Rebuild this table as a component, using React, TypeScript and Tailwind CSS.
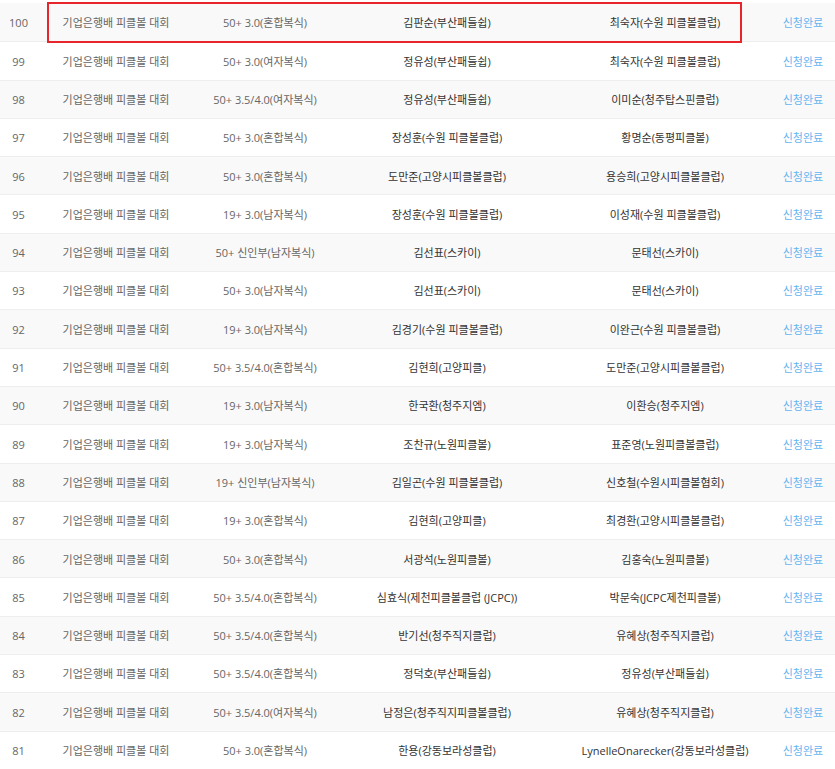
import React from "react";

type Row = {
  no: number;
  event: string;
  division: string;
  player1: string;
  player2: string;
};

const rows: Row[] = [
  { no: 100, event: "기업은행배 피클볼 대회", division: "50+ 3.0(혼합복식)", player1: "김판순(부산패들쉽)", player2: "최숙자(수원 피클볼클럽)" },
  { no: 99, event: "기업은행배 피클볼 대회", division: "50+ 3.0(여자복식)", player1: "정유성(부산패들쉽)", player2: "최숙자(수원 피클볼클럽)" },
  { no: 98, event: "기업은행배 피클볼 대회", division: "50+ 3.5/4.0(여자복식)", player1: "정유성(부산패들쉽)", player2: "이미순(청주탑스핀클럽)" },
  { no: 97, event: "기업은행배 피클볼 대회", division: "50+ 3.0(혼합복식)", player1: "장성훈(수원 피클볼클럽)", player2: "황명순(동평피클볼)" },
  { no: 96, event: "기업은행배 피클볼 대회", division: "50+ 3.0(혼합복식)", player1: "도만준(고양시피클볼클럽)", player2: "용승희(고양시피클볼클럽)" },
  { no: 95, event: "기업은행배 피클볼 대회", division: "19+ 3.0(남자복식)", player1: "장성훈(수원 피클볼클럽)", player2: "이성재(수원 피클볼클럽)" },
  { no: 94, event: "기업은행배 피클볼 대회", division: "50+ 신인부(남자복식)", player1: "김선표(스카이)", player2: "문태선(스카이)" },
  { no: 93, event: "기업은행배 피클볼 대회", division: "50+ 3.0(남자복식)", player1: "김선표(스카이)", player2: "문태선(스카이)" },
  { no: 92, event: "기업은행배 피클볼 대회", division: "19+ 3.0(남자복식)", player1: "김경기(수원 피클볼클럽)", player2: "이완근(수원 피클볼클럽)" },
  { no: 91, event: "기업은행배 피클볼 대회", division: "50+ 3.5/4.0(혼합복식)", player1: "김현희(고양피클)", player2: "도만준(고양시피클볼클럽)" },
  { no: 90, event: "기업은행배 피클볼 대회", division: "19+ 3.0(남자복식)", player1: "한국환(청주지엠)", player2: "이환승(청주지엠)" },
  { no: 89, event: "기업은행배 피클볼 대회", division: "19+ 3.0(남자복식)", player1: "조찬규(노원피클볼)", player2: "표준영(노원피클볼클럽)" },
  { no: 88, event: "기업은행배 피클볼 대회", division: "19+ 신인부(남자복식)", player1: "김일곤(수원 피클볼클럽)", player2: "신호철(수원시피클볼협회)" },
  { no: 87, event: "기업은행배 피클볼 대회", division: "19+ 3.0(혼합복식)", player1: "김현희(고양피클)", player2: "최경환(고양시피클볼클럽)" },
  { no: 86, event: "기업은행배 피클볼 대회", division: "50+ 3.0(혼합복식)", player1: "서광석(노원피클볼)", player2: "김홍숙(노원피클볼)" },
  { no: 85, event: "기업은행배 피클볼 대회", division: "50+ 3.5/4.0(혼합복식)", player1: "심효식(제천피클볼클럽 (JCPC))", player2: "박문숙(JCPC제천피클볼)" },
  { no: 84, event: "기업은행배 피클볼 대회", division: "50+ 3.5/4.0(혼합복식)", player1: "반기선(청주직지클럽)", player2: "유혜상(청주직지클럽)" },
  { no: 83, event: "기업은행배 피클볼 대회", division: "50+ 3.5/4.0(혼합복식)", player1: "정덕호(부산패들쉽)", player2: "정유성(부산패들쉽)" },
  { no: 82, event: "기업은행배 피클볼 대회", division: "50+ 3.5/4.0(여자복식)", player1: "남정은(청주직지피클볼클럽)", player2: "유혜상(청주직지클럽)" },
  { no: 81, event: "기업은행배 피클볼 대회", division: "50+ 3.0(혼합복식)", player1: "한용(강동보라성클럽)", player2: "LynelleOnarecker(강동보라성클럽)" },
];

export default function App() {
  return (
    <div
      className="relative w-[835px] h-[769px] overflow-hidden bg-white pt-[3px] text-[11px]"
      style={{ fontFamily: '"Open Sans", "Noto Sans CJK KR", sans-serif' }}
    >
      <div className="border-b-2 border-[#e6e6e6]">
        {rows.map((r, i) => (
          <div
            key={r.no}
            className={`grid grid-cols-[37px_158px_140px_224px_212px_64px] items-center h-[38.3px] pt-[2px] border-t border-[#eeeeee] first:border-t-0 ${
              i % 2 === 0 ? "bg-[#f9f9f9]" : "bg-white"
            }`}
          >
            <div className="text-center text-[#666]">{r.no}</div>
            <div className="text-center text-[#666]">{r.event}</div>
            <div className="text-center text-[#666]">{r.division}</div>
            <div className="text-center text-[#333]">{r.player1}</div>
            <div className="text-center text-[#333]">{r.player2}</div>
            <div className="text-center text-[#64b5f0]">신청완료</div>
          </div>
        ))}
      </div>

      {/* highlight box */}
      <div className="absolute left-[47px] top-[2px] w-[695px] h-[41px] border-2 border-[#e8252b] pointer-events-none" />
    </div>
  );
}
